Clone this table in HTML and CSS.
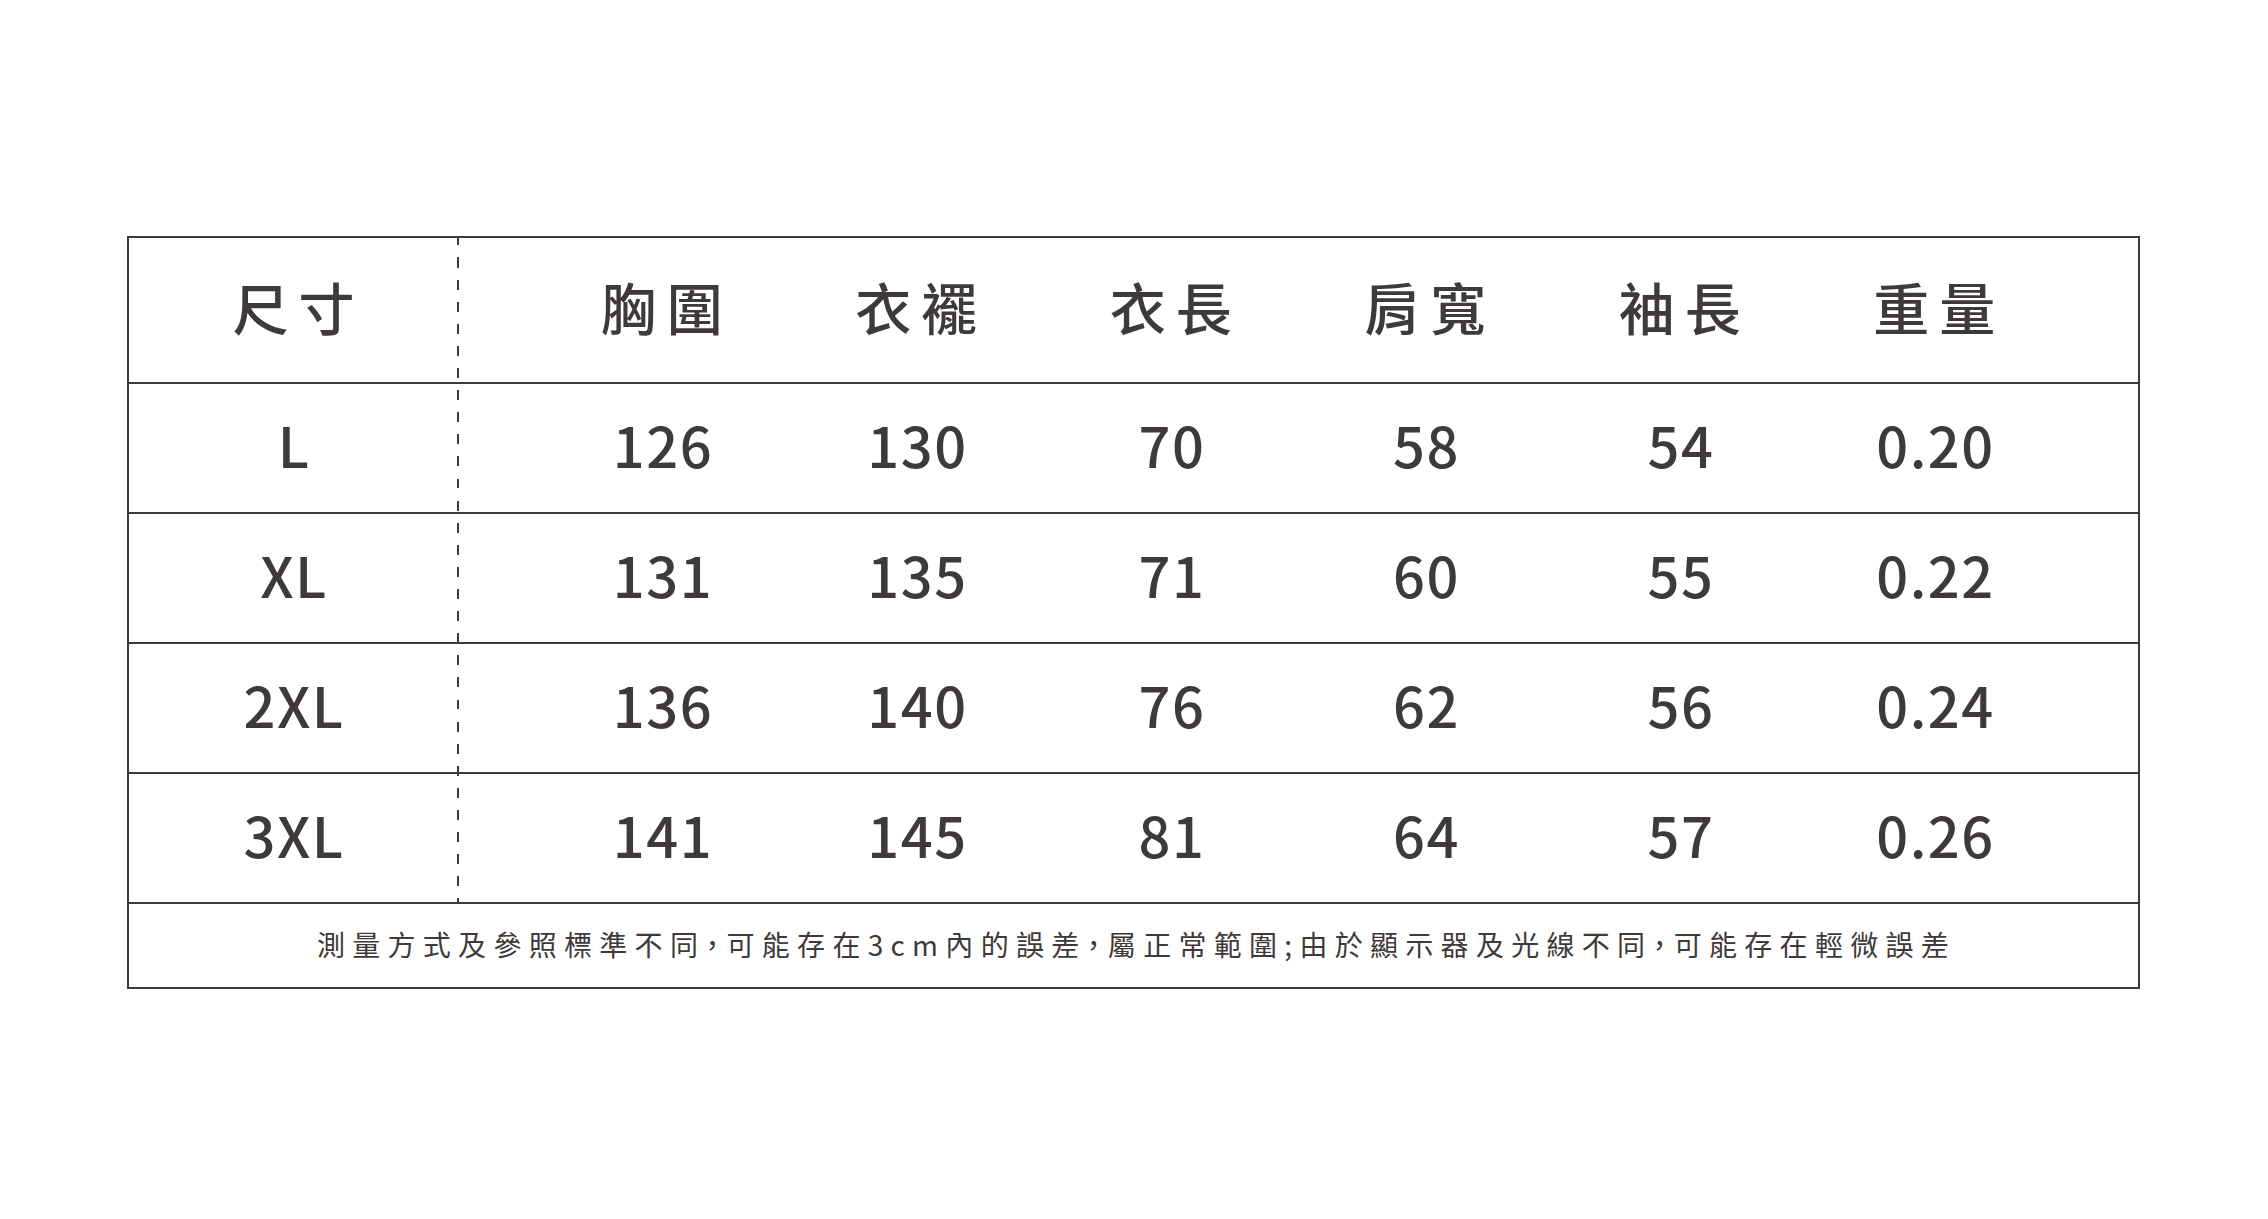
FILE: index.html
```html
<!DOCTYPE html>
<html lang="zh-Hant">
<head>
<meta charset="utf-8">
<title>尺寸表</title>
<link rel="stylesheet" href="styles.css">
</head>
<body>
<div class="page">
  <div class="size-table">
    <div class="row head">
      <div class="label">尺寸</div>
      <div class="vals">
        <div>胸圍</div><div>衣襬</div><div>衣長</div><div>肩寬</div><div>袖長</div><div>重量</div>
      </div>
    </div>
    <div class="row">
      <div class="label">L</div>
      <div class="vals">
        <div>126</div><div>130</div><div>70</div><div>58</div><div>54</div><div>0.20</div>
      </div>
    </div>
    <div class="row">
      <div class="label">XL</div>
      <div class="vals">
        <div>131</div><div>135</div><div>71</div><div>60</div><div>55</div><div>0.22</div>
      </div>
    </div>
    <div class="row">
      <div class="label">2XL</div>
      <div class="vals">
        <div>136</div><div>140</div><div>76</div><div>62</div><div>56</div><div>0.24</div>
      </div>
    </div>
    <div class="row">
      <div class="label">3XL</div>
      <div class="vals">
        <div>141</div><div>145</div><div>81</div><div>64</div><div>57</div><div>0.26</div>
      </div>
    </div>
    <div class="note">測量方式及參照標準不同，可能存在3cm內的誤差，屬正常範圍;由於顯示器及光線不同，可能存在輕微誤差</div>
  </div>
</div>
</body>
</html>
```

FILE: styles.css
```css
html, body {
  margin: 0;
  background: #ffffff;
}

.page {
  padding: 236px 0 0 127px;
  font-family: "Noto Sans CJK TC", "Noto Sans CJK SC", sans-serif;
  color: #3e3a39;
}

.size-table {
  width: 2013px;
  box-sizing: border-box;
  border: 2px solid #3e3a39;
  background-image: repeating-linear-gradient(to bottom,
      #3e3a39 0 7.4px,
      transparent 7.4px 19.5px,
      #3e3a39 19.5px 22.1px);
  background-size: 2px 666px;
  background-position: 328px 0;
  background-repeat: no-repeat;
}

.row {
  display: flex;
  height: 130px;
  box-sizing: border-box;
  border-bottom: 2px solid #3e3a39;
  font-size: 56px;
  font-weight: 500;
  line-height: 1;
}

.row.head {
  height: 146px;
}

.label {
  flex: none;
  width: 330px;
  box-sizing: border-box;
  padding-bottom: 8px;
  display: flex;
  align-items: center;
  justify-content: center;
  letter-spacing: 1.5px;
}

.vals {
  flex: 1;
  display: grid;
  grid-template-columns: repeat(6, 1fr);
  padding: 0 76px 8px;
  align-items: center;
  justify-items: center;
}

.vals > div {
  letter-spacing: 1.5px;
  padding-left: 1.5px;
}

.head .label,
.head .vals > div {
  letter-spacing: 10px;
  padding-left: 9px;
}

.note {
  height: 83px;
  box-sizing: border-box;
  padding: 0 0 3px 6px;
  display: flex;
  align-items: center;
  justify-content: center;
  font-size: 28px;
  font-weight: 400;
  line-height: 1;
  letter-spacing: 7.3px;
  font-feature-settings: "halt";
}
```
